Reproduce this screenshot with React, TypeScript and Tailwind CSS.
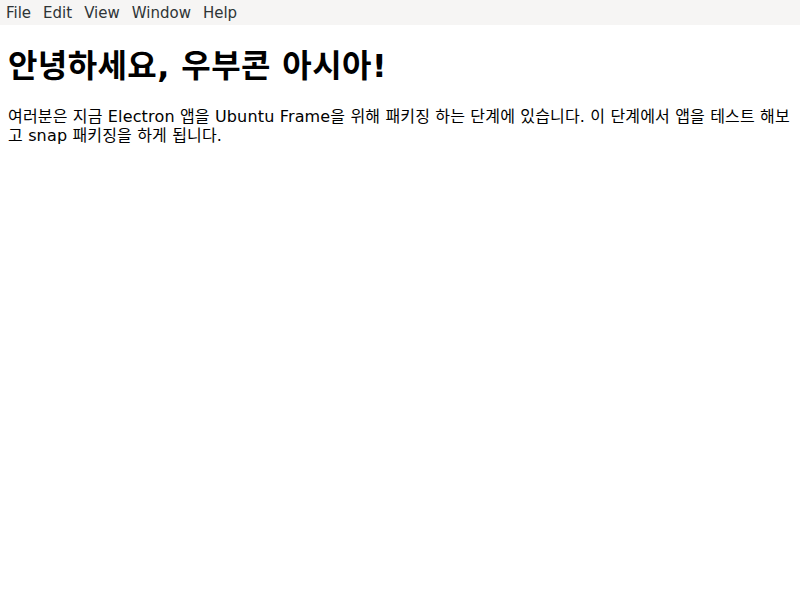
export default function App() {
  const font = { fontFamily: '"DejaVu Sans", "Noto Sans CJK KR", sans-serif' };
  return (
    <div className="min-h-[600px] bg-white text-black font-['DejaVu_Sans','Noto_Sans_CJK_KR',sans-serif]" style={font}>
      <div className="flex h-[25px] items-center bg-[#f6f5f4] pt-px text-[15px] text-[#2e3436]">
        <span className="px-[6px]">File</span>
        <span className="px-[6px]">Edit</span>
        <span className="px-[6px]">View</span>
        <span className="px-[6px]">Window</span>
        <span className="px-[6px]">Help</span>
      </div>
      <div className="px-2 py-px">
        <h1 className="mt-[16px] mb-[17px] text-[32px] font-bold leading-normal tracking-[0.4px]">안녕하세요, 우부콘 아시아!</h1>
        <p className="my-4 text-base leading-[19px] tracking-[0.16px]">
          여러분은 지금 Electron 앱을 Ubuntu Frame을 위해 패키징 하는 단계에 있습니다. 이 단계에서 앱을 테스트 해보고 snap 패키징을 하게 됩니다.
        </p>
      </div>
    </div>
  );
}
